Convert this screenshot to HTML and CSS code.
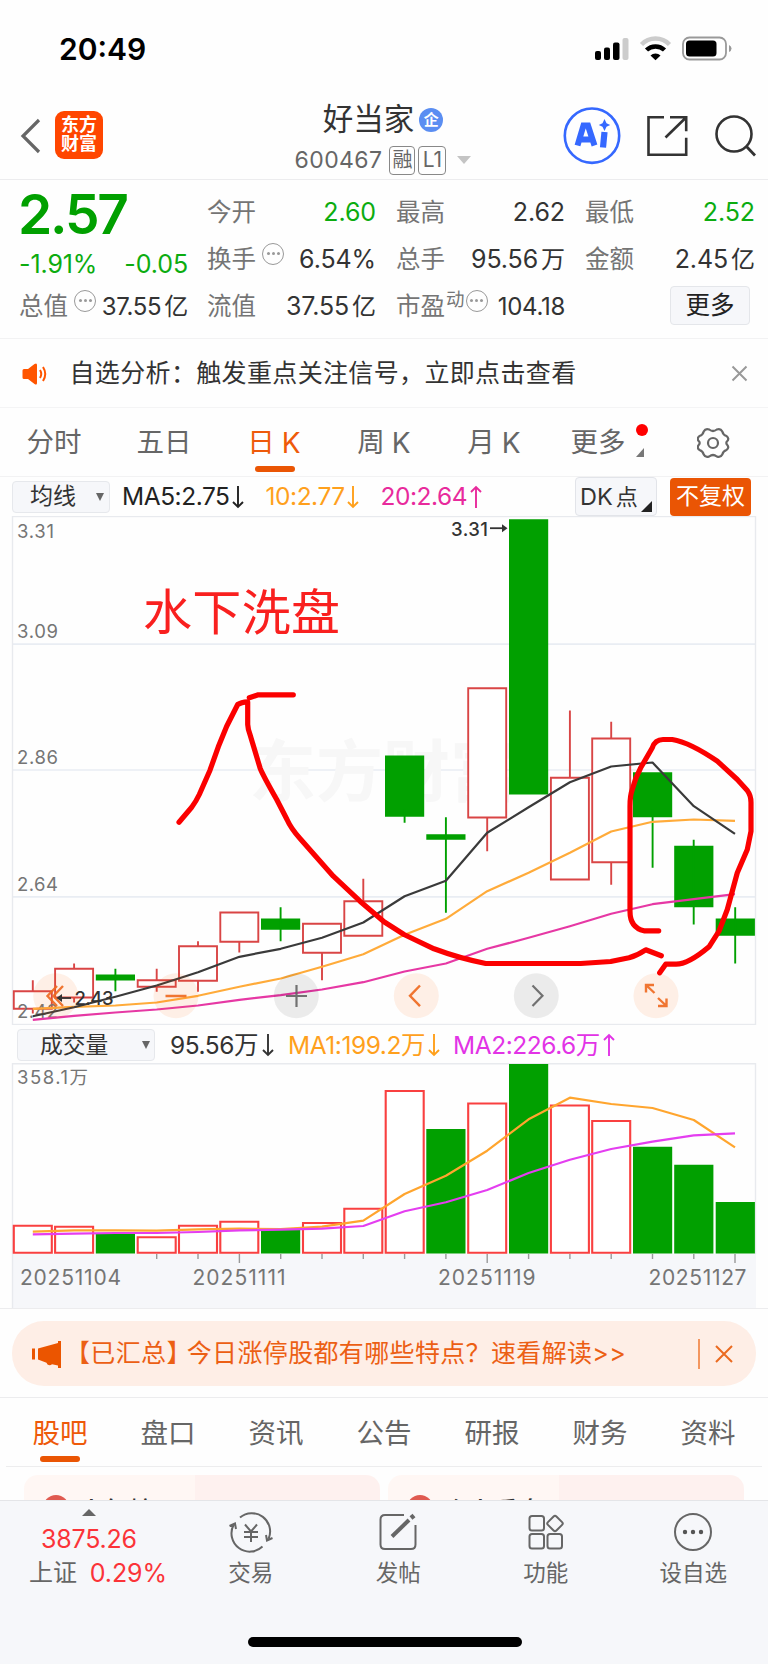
FILE: index.html
```html
<!DOCTYPE html>
<html lang="zh-CN">
<head>
<meta charset="utf-8">
<title>好当家 600467</title>
<link rel="stylesheet" href="styles.css">
</head>
<body>
<div class="phone">
  <div class="status">
    <span class="clock">20:49</span>
    <svg class="status-icons" width="138" height="26" viewBox="595 36 138 26">
      <rect x="595" y="51" width="6" height="9" rx="2"/>
      <rect x="604" y="47.500" width="6" height="12.500" rx="2"/>
      <rect x="613" y="42.500" width="6.500" height="17.500" rx="2"/>
      <rect x="622.500" y="38" width="6" height="22" rx="2" fill="#ccc"/>
      <path d="M641.500 44.500a19.500 19.500 0 0 1 28 0" fill="none" stroke="#ccc" stroke-width="4.500"/>
      <path d="M646.500 50a13 13 0 0 1 18 0" fill="none" stroke="#000" stroke-width="4.500"/>
      <path d="M650.500 55.500a7 7 0 0 1 10 0l-5 4.800z"/>
      <rect x="683" y="37.500" width="43" height="22" rx="6.500" fill="none" stroke="#999" stroke-width="1.800"/>
      <rect x="686" y="40.500" width="30.500" height="16" rx="3.500"/>
      <path d="M729 45q2.500 1 2.500 3.500t-2.500 3.500z" fill="#999"/>
    </svg>
  </div>

  <header class="header">
    <div class="header-left">
      <svg width="22" height="36" viewBox="0 0 22 36"><path d="M19 2L3 18l16 16" fill="none" stroke="#666" stroke-width="3.200"/></svg>
      <div class="brand">东方<br>财富</div>
    </div>
    <div class="title">
      <div class="name">好当家<span class="ent">企</span></div>
      <div class="code"><span class="code-num">600467</span><span class="tag">融</span><span class="tag tag-l">L1</span><i class="caret"></i></div>
    </div>
    <div class="header-right">
      <svg width="200" height="62" viewBox="560 105 200 62" fill="none">
        <circle cx="592" cy="135.700" r="27.200" stroke="#3568ff" stroke-width="2.600"/>
        <path d="M577.500 145.500l6-20h4.500l6.500 20M580.500 139.500h11" stroke="#3568ff" stroke-width="6"/>
        <path d="M604.500 132l-1.500 15.500" stroke="#3568ff" stroke-width="6.200"/>
        <path d="M604.500 119l2 4.200 3.700 1.800-3.700 1.800-2 4.200-2-4.200-3.700-1.800 3.700-1.800z" fill="#3568ff"/>
        <path d="M664 117.300h-15.500v37.400h37.700v-17M670 117.300h16.200v14M685.500 118l-20 19.500" stroke="#333" stroke-width="2.600"/>
        <circle cx="734" cy="134" r="17.500" stroke="#333" stroke-width="2.600"/>
        <path d="M746 146l9 9.500" stroke="#333" stroke-width="2.800"/>
      </svg>
    </div>
  </header>

  <section class="quote">
    <div class="q-main">
      <div class="price">2.57</div>
      <div class="chg"><span>-1.91%</span><span>-0.05</span></div>
      <div class="cell total"><label>总值</label><i class="info"></i><b>37.55<u>亿</u></b></div>
    </div>
    <div class="q-grid">
      <div class="cell"><label>今开</label><b class="g">2.60</b></div>
      <div class="cell"><label>最高</label><b>2.62</b></div>
      <div class="cell"><label>最低</label><b class="g">2.52</b></div>
      <div class="cell"><label>换手</label><i class="info"></i><b>6.54%</b></div>
      <div class="cell"><label>总手</label><b>95.56<u>万</u></b></div>
      <div class="cell"><label>金额</label><b>2.45<u>亿</u></b></div>
      <div class="cell"><label>流值</label><b>37.55<u>亿</u></b></div>
      <div class="cell pe"><label>市盈</label><em>动</em><i class="info"></i><b>104.18</b></div>
      <div class="cell"><button class="more">更多</button></div>
    </div>
  </section>

  <div class="notice">
    <svg width="28" height="24" viewBox="0 0 28 24"><path d="M1.500 8.500q0-1.500 1.500-1.500h4L13.500 2q2.500-1.500 2.500 1v18q0 2.500-2.500 1L7 17H3q-1.500 0-1.500-1.500z" fill="#ff5500"/><path d="M19 8q2.500 4 0 8M22 5q4.500 7 0 14" fill="none" stroke="#ff5500" stroke-width="2"/></svg>
    <span>自选分析：触发重点关注信号，立即点击查看</span>
    <svg class="close" width="17" height="17" viewBox="0 0 17 17"><path d="M1.500 1.500l14 14M15.500 1.500l-14 14" stroke="#999" stroke-width="2"/></svg>
  </div>

  <nav class="ktabs">
    <span>分时</span><span>五日</span><span class="on">日<s>K</s></span><span>周<s>K</s></span><span>月<s>K</s></span>
    <span class="ktab-more">更多<i class="dot"></i><i class="corner"></i></span>
    <span><svg width="34" height="34" viewBox="-16 -17 34 34" fill="none" stroke="#666" stroke-width="2.200"><circle r="5"/><path d="M-3.800-13.500Q0-10.500 3.800-13.500Q7.500-15 9.300-11.500Q10-8.200 13.500-7Q16.500-4.500 14.300-2Q12.300 0 14.300 2Q16.500 4.500 13.500 7Q10 8.200 9.300 11.500Q7.500 15 3.800 13.500Q0 10.500-3.800 13.500Q-7.500 15-9.300 11.500Q-10 8.200-13.500 7Q-16.500 4.500-14.300 2Q-12.300 0-14.300-2Q-16.500-4.500-13.500-7Q-10-8.200-9.300-11.500Q-7.500-15-3.800-13.500z"/></svg></span>
  </nav>

  <div class="marow">
    <div class="select sel-ma"><span>均线</span><i></i></div>
    <div class="ma c-black">MA5:2.75<svg width="12" height="24" viewBox="0 0 12 24"><path d="M6 1v21M1 17l5 5 5-5"/></svg></div>
    <div class="ma c-orange">10:2.77<svg width="12" height="24" viewBox="0 0 12 24"><path d="M6 1v21M1 17l5 5 5-5"/></svg></div>
    <div class="ma c-pink">20:2.64<svg width="12" height="24" viewBox="0 0 12 24"><path d="M6 23V2M1 7l5-5 5 5"/></svg></div>
    <button class="dk">DK<span>点</span></button>
    <button class="fq">不复权</button>
  </div>

  <svg class="chart" width="768" height="509" viewBox="0 516.500 768 509">
    <path d="M12.500 644.700H755.500M12.500 770.500H755.500M12.500 897.300H755.500" stroke="#e9edf3" stroke-width="1.700"/>
    <rect x="12.500" y="517" width="743" height="508" fill="none" stroke="#e8eaee" stroke-width="1.400"/>
    <text class="mark" x="249" y="796" textLength="268">东方财富</text>
    <g fill="#fff" stroke="#d94545" stroke-width="1.900">
      <path d="M32.800 980.700V1014M74.100 964V1003M156.700 969.300V992.300M198 941.700V992.300M239.300 942V953M322 953V980.700M363.300 879.300V902M487.200 818V851.700M569.900 711V779M611.200 722.300V739M611.200 862V885.300"/>
      <path d="M13.800 991.700h38v17.600h-38zM55.100 969.300h38v28.700h-38zM137.700 980.700h38v6.600h-38zM179 946.700h38v34.600h-38zM220.300 913h38v29.300h-38zM303 924.300h38v29h-38zM344.300 901.700h38v34.600h-38zM468.200 688.700h38v129.300h-38zM550.900 778.300h38v101.700h-38zM592.200 739h38v123.700h-38z"/>
    </g>
    <g class="ylab">
      <text x="17" y="538" textLength="37">3.31</text><text x="17" y="638" textLength="41">3.09</text>
      <text x="17" y="764.700" textLength="41">2.86</text><text x="17" y="891.700" textLength="41">2.64</text>
      <text x="17" y="1018" textLength="41">2.42</text>
    </g>
    <g fill="#01a000">
      <path d="M95.800 975h39.200v6h-39.200zM261 919h39.200v11.300h-39.200zM385 756h39.200v61.300h-39.200zM426.300 834.700h39.200v5.600h-39.200zM509 519.700h39.200v275.300h-39.200zM633 772.700h39.200v45h-39.200zM674.200 846.300h39.200v61.400h-39.200zM715.700 919h39.200v17.300h-39.200z"/>
      <path d="M115.400 969.300V991.700M280.600 907.700V941.700M404.600 810V823.300M445.900 817.700V913.300M652.600 810V868.300M693.700 840.300V925M735.200 907.700V964" stroke="#01a000" stroke-width="1.900"/>
    </g>
    <g fill="none" stroke-width="2.200" stroke-linejoin="round">
      <polyline stroke="#e638a4" points="32.800,1020.300 74.100,1016.300 115.400,1013 156.700,1010 198,1006 239.400,1000.300 280.700,995.700 322,990 363.300,982.700 404.600,972 445.900,964 487.200,949.300 528.600,938.300 569.900,926.700 611.200,914.300 652.500,904.700 693.800,899.700 735,894.700"/>
      <polyline stroke="#ffab3a" points="32.800,1009.300 74.100,1007.300 115.400,1006 156.700,1003 198,996.300 239.400,987.300 280.700,979 322,967.300 363.300,954.700 404.600,935.300 445.900,919.300 487.200,891.700 528.600,873.300 569.900,853.300 611.200,832 652.500,822.300 693.800,820 735,821.300"/>
      <polyline stroke="#3a3a3a" points="32.800,1016.700 74.100,1007.700 115.400,997.300 156.700,986 198,972.700 239.400,957.300 280.700,949.300 322,938.300 363.300,923 404.600,896.700 445.900,881.300 487.200,833.300 528.600,807.700 569.900,782.700 611.200,767 652.500,763 693.800,806.700 735,834.300"/>
    </g>
    <text class="hi" x="451" y="536" textLength="37">3.31</text>
    <path d="M490 528.700h13" stroke="#333" stroke-width="1.800"/><path d="M502 524.700l5.500 4-5.500 4z" fill="#333"/>
    <g opacity=".92">
      <circle cx="55.700" cy="996.300" r="22.500" fill="#ff6a13" fill-opacity=".11"/>
      <circle cx="176" cy="996.300" r="22.500" fill="#ff6a13" fill-opacity=".11"/>
      <circle cx="296.300" cy="996.300" r="22.500" fill="#000" fill-opacity=".08"/>
      <circle cx="416.300" cy="996.300" r="22.500" fill="#ff6a13" fill-opacity=".11"/>
      <circle cx="536.300" cy="996.300" r="22.500" fill="#000" fill-opacity=".08"/>
      <circle cx="656" cy="996.300" r="22.500" fill="#ff6a13" fill-opacity=".11"/>
      <g fill="none" stroke="#ef6a20" stroke-width="2.400">
        <path d="M57 986.500l-9.500 10 9.500 10M63 986.500l-9.500 10 9.500 10M165.500 996.500h21M420 986l-10 10.300 10 10.300"/>
        <path d="M646 993v-7.500h8M646 985.500l8.500 8M666.500 999v7.500h-8.500M666.500 1006.500l-8.500-8"/>
      </g>
      <path d="M286 996.500h21M296.500 985.500v22M532.500 986l10 10.300-10 10.300" fill="none" stroke="#666" stroke-width="2.200"/>
    </g>
    <path d="M60 998.500h11" stroke="#333" stroke-width="1.800"/><path d="M62 994.500l-5.500 4 5.500 4z" fill="#333"/>
    <text class="hi lo" x="74.500" y="1005.300" textLength="39">2.43</text>
    <g class="ink">
      <path d="M179 822.700L191.700 807.700Q196 802 199.300 795L210 770.700L218.300 747.300L226.700 726.700L237.700 705Q241 702.700 247.700 702.300V725Q248 730 250 735L260 768.300Q262 774 276.700 800L287 820Q291 829 300 839L333.300 876.700L360 901.700L384 922.300L404 935L434 949.300Q460 959 485.700 964H580.700L610.700 962L629 958.300Q637 956 645.700 950.300L661.300 956.300"/>
      <path d="M249.300 698.300L258.300 695.300H293.300"/>
      <path d="M658.700 931.300H644Q630 928 630 912V806.700Q630 796 632.300 790Q635 779 640.700 768.300L652.300 748.300Q655 740 663 740H672.300Q690 743 717.300 761.700L737.300 780L747.300 791Q751 796 751 803V831.700L747.300 850L737.300 873.300L727.300 910L719 931.700L709 947.300Q688 965 675.700 964.700H665.700L659.700 973.300"/>
    </g>
    <text class="note" x="143" y="630.500" textLength="197">水下洗盘</text>
  </svg>

  <div class="marow vol">
    <div class="select sel-vol"><span>成交量</span><i></i></div>
    <div class="ma c-dark">95.56万<svg width="12" height="24" viewBox="0 0 12 24"><path d="M6 1v21M1 17l5 5 5-5"/></svg></div>
    <div class="ma c-orange">MA1:199.2万<svg width="12" height="24" viewBox="0 0 12 24"><path d="M6 1v21M1 17l5 5 5-5"/></svg></div>
    <div class="ma c-mag">MA2:226.6万<svg width="12" height="24" viewBox="0 0 12 24"><path d="M6 23V2M1 7l5-5 5 5"/></svg></div>
  </div>

  <svg class="chart" width="768" height="245" viewBox="0 1063 768 245">
    <rect x="12.500" y="1253.500" width="743.500" height="54.500" fill="#f6f7fa"/>
    <path d="M12.500 1308V1063.700H755.500V1254" fill="none" stroke="#e8eaee" stroke-width="1.400"/>
    <text class="ylab" x="17" y="1084" textLength="71">358.1万</text>
    <g fill="#fff" stroke="#f94040" stroke-width="2.100">
      <path d="M13.800 1225.700h38v27h-38zM55.100 1226.700h38v26h-38zM137.700 1237.300h38v15.400h-38zM179 1225.700h38v27h-38zM220.300 1221.700h38v31h-38zM303 1223h38v29.700h-38zM344.300 1208.700h38v44h-38zM385.700 1091h38v161.700h-38zM468.200 1103.500h38v149.200h-38zM550.900 1105.500h38v147.200h-38zM592.200 1121h38v131.700h-38z"/>
    </g>
    <path fill="#01a000" d="M95.800 1233.700h39.200v19.800h-39.200zM261 1230h39.200v23.500h-39.200zM426.300 1129h39.200v124.500h-39.200zM509 1064h39.200v189.500h-39.200zM633 1146.700h39.200v106.800h-39.200zM674.200 1164.700h39.200v88.800h-39.200zM715.700 1202h39.200v51.500h-39.200z"/>
    <path d="M156.700 1254v5M198 1254v5M280.700 1254v5M322 1254v5M363.300 1254v5M404.600 1254v5M445.900 1254v5M528.600 1254v5M569.900 1254v5M611.200 1254v5M652.500 1254v5M693.800 1254v5M239.400 1254v9M487.200 1254v9M735 1254v9" stroke="#999" stroke-width="1.400"/>
    <g fill="none" stroke-width="2.200" stroke-linejoin="round">
      <polyline stroke="#ffa52e" points="32.800,1231.700 74.100,1230.300 115.400,1230.300 156.700,1230.700 198,1229.300 239.400,1228.700 280.700,1229 322,1226.700 363.300,1220.700 404.600,1194 445.900,1175.700 487.200,1150.700 528.600,1119.300 569.900,1097.700 611.200,1104 652.500,1108 693.800,1120 735,1147.300"/>
      <polyline stroke="#e43ef0" points="32.800,1234.300 74.100,1233.700 115.400,1233 156.700,1233 198,1232 239.400,1230.300 280.700,1229.700 322,1228.700 363.300,1226 404.600,1211.300 445.900,1202.300 487.200,1190 528.600,1173 569.900,1159.700 611.200,1149 652.500,1141.700 693.800,1135.300 735,1133.300"/>
    </g>
    <g class="xlab">
      <text x="20" y="1284.500" textLength="101">20251104</text><text x="192.500" y="1284.500" textLength="93">20251111</text>
      <text x="438" y="1284.500" textLength="97.500">20251119</text><text x="648.500" y="1284.500" textLength="98">20251127</text>
    </g>
  </svg>

  <div class="promo">
    <div class="promo-pill">
      <svg width="32" height="28" viewBox="0 0 32 28" fill="#eb5500"><path d="M1 8.500h3v11H1zM7 8.500L27 3V1h3v27h-3v-2.500l-6-1.200q-2 1.700-4.500.2l-1-1.800L7 19.500z"/></svg>
      <span class="promo-text"><span class="br">【已汇总】</span>今日涨停股都有哪些特点？速看解读&gt;&gt;</span>
      <i class="bar"></i>
      <svg width="18" height="18" viewBox="0 0 18 18"><path d="M1 1l16 16M17 1L1 17" stroke="#eb6a20" stroke-width="2"/></svg>
    </div>
  </div>

  <nav class="btabs"><span class="on">股吧</span><span>盘口</span><span>资讯</span><span>公告</span><span>研报</span><span>财务</span><span>资料</span></nav>

  <div class="cards">
    <div class="card"><i></i><span>人气榜</span></div>
    <div class="card card-b"><i></i><span>个人看盘</span></div>
  </div>

  <footer class="dock">
    <div class="index"><i></i><span class="idx">3875.26</span><span class="idx2"><em>上证</em>0.29%</span></div>
    <div class="item"><svg width="46" height="42" viewBox="-23 -21 46 42" fill="none" stroke="#666" stroke-width="2"><path d="M-11-14.500A18.300 18.300 0 0 1 17.500 7M21.500 6l-5.500 2.500-1-5.500M11.500 14.500A18.300 18.300 0 0 1-17.500-7M-21.500-6l5.500-2.500 1 5.500M-6-7.500l6 7 6-7M0 0v10M-7 0H7M-7 5H7"/></svg><span>交易</span></div>
    <div class="item"><svg width="46" height="42" viewBox="-23 -21 46 42" fill="none" stroke="#666" stroke-width="2"><path d="M6-17h-19q-4.500 0-4.500 4.500v25q0 4.500 4.500 4.500h26q4.500 0 4.500-4.500V-7"/><path d="M-6 4.500L11-12" stroke-width="4"/><path d="M13-14l3-2.500" stroke-width="4.500"/></svg><span>发帖</span></div>
    <div class="item"><svg width="46" height="42" viewBox="-23 -21 46 42" fill="none" stroke="#666" stroke-width="2"><rect x="-16.500" y="-16" width="14.500" height="14.500" rx="2.500"/><rect x="-16.500" y="2" width="14.500" height="14.500" rx="2.500"/><rect x="1.500" y="2" width="14.500" height="14.500" rx="2.500"/><rect x="3" y="-14.500" width="12" height="12" rx="2" transform="rotate(45 9 -8.500)"/></svg><span>功能</span></div>
    <div class="item"><svg width="46" height="42" viewBox="-23 -21 46 42"><circle r="18" fill="none" stroke="#666" stroke-width="2"/><path d="M-8 0h.01M0 0h.01M8 0h.01" stroke="#555" stroke-width="4.400" stroke-linecap="round"/></svg><span>设自选</span></div>
    <i class="home"></i>
  </footer>
</div>
</body>
</html>
```

FILE: styles.css
```css
* { box-sizing: border-box; }
body { margin: 0; background: #fff; }
.phone { width: 768px; height: 1664px; overflow: hidden; display: flex; flex-direction: column; background: #fefefe; color: #333; font-family: Inter, "Noto Sans CJK SC", sans-serif; line-height: 1; }
.phone > * { flex: none; }
svg { flex: none; }
i, em { font-style: normal; }
button { font-family: inherit; margin: 0; padding: 0; line-height: 1; }

.status { height: 100px; padding: 0 35px 0 59px; display: flex; justify-content: space-between; align-items: flex-start; }
.clock { font-size: 30px; font-weight: 600; color: #000; margin-top: 34px; }
.status-icons { margin-top: 36px; }

.header { height: 80px; display: grid; grid-template-columns: 279px 208px 1fr; border-bottom: 1.500px solid #ececee; }
.header-left { display: flex; align-items: flex-start; padding-left: 20px; }
.header-left svg { margin-top: 18px; }
.brand { width: 48px; height: 48px; margin: 11px 0 0 13px; border-radius: 9px; background: #ff4600; color: #fff; font-size: 18px; font-weight: 700; line-height: 19px; text-align: center; padding-top: 4px; }
.title { display: flex; flex-direction: column; align-items: center; }
.name { display: flex; align-items: center; font-size: 30.500px; height: 40px; padding-bottom: 1px; color: #333; }
.ent { width: 24px; height: 24px; margin-left: 5px; border-radius: 50%; background: #5b8ef2; color: #fff; font-size: 15px; font-weight: 700; line-height: 23px; text-align: center; }
.code { display: flex; align-items: center; height: 40px; color: #666; font-size: 23px; }
.code-num { margin-right: 7px; letter-spacing: .4px; }
.tag { width: 26px; height: 29px; border: 1.600px solid #888; border-radius: 4px; font-size: 20px; line-height: 26px; text-align: center; }
.tag-l { width: 28px; margin-left: 3px; font-size: 21px; }
.caret { margin-left: 11px; border: 7px solid transparent; border-top: 8px solid #c4c4c4; border-bottom: 0; }
.header-right { padding: 5px 0 0 73px; }

.quote { height: 159px; border-bottom: 1.500px solid #f2f2f3; display: flex; padding: 9px 12px 0 19px; }
.q-main { width: 169px; margin-right: 19px; }
.price { height: 51px; line-height: 51px; font-size: 55px; font-weight: 600; color: #01a000; letter-spacing: -2.200px; margin-left: -1px; }
.chg { display: flex; justify-content: space-between; height: 43px; line-height: 48px; font-size: 25px; color: #0cac10; letter-spacing: -.1px; }
.q-grid { flex: 1; display: grid; grid-template-columns: 169px 169px 170px; grid-template-rows: 47px 47px 47px; column-gap: 20px; }
.cell { display: flex; align-items: center; font-size: 25px; height: 47px; }
.cell label { color: #757575; font-size: 24.500px; }
.cell b { margin-left: auto; font-weight: 400; color: #333; white-space: nowrap; letter-spacing: -.1px; }
.cell b.g { color: #0cac10; }
.cell u { text-decoration: none; font-size: 24px; margin-left: 3px; }
.total b, .pe b { font-size: 24px; letter-spacing: -.3px; }
.info { flex: none; width: 22px; height: 22px; border: 1.800px solid #999; border-radius: 50%; margin: -12px 0 0 6px; display: flex; align-items: center; justify-content: center; }
.info::before { content: ""; width: 3px; height: 3px; border-radius: 50%; background: #999; box-shadow: -5px 0 #999, 5px 0 #999; }
.pe em { font-size: 18.500px; color: #757575; margin: -15px 0 0 1px; }
.pe .info { margin-left: 1px; }
.more { width: 80px; height: 39px; margin: -3px 0 0 85px; border: 1.500px solid #e4e6ea; border-radius: 4px; background: #f6f7fa; font-size: 24.500px; color: #222; }

.notice { height: 69px; border-bottom: 1.500px solid #f4f4f5; display: flex; align-items: center; padding: 1px 20px 0 21px; font-size: 25px; letter-spacing: .35px; color: #333; }
.notice span { margin-left: 20.500px; white-space: nowrap; }
.close { margin-left: auto; }

.ktabs { height: 69px; border-bottom: 1.500px solid #f2f2f3; display: grid; grid-template-columns: repeat(7, 110px); color: #666; font-size: 27.500px; }
.ktabs span { position: relative; display: flex; align-items: center; justify-content: center; padding: 2px 2px 0 0; }
.ktabs s { text-decoration: none; margin-left: 7px; font-size: 28px; }
.ktabs .on, .btabs .on { color: #ee5a0a; }
.ktabs .on::after, .btabs .on::after { content: ""; position: absolute; left: 50%; bottom: 4px; width: 40px; margin-left: -20px; height: 6px; border-radius: 3px; background: #ea5504; }
.ktabs .ktab-more { padding-right: 14px; }
.dot { position: absolute; left: 86px; top: 16px; width: 12px; height: 12px; border-radius: 50%; background: #f00; }
.corner { position: absolute; left: 86px; top: 40px; border-left: 8px solid transparent; border-bottom: 9px solid #777; }

.marow { height: 39px; display: flex; align-items: center; padding-left: 12px; }
.select { display: flex; align-items: center; height: 32px; border: 1.500px solid #e6e8ec; border-radius: 4px; background: #f6f7fa; color: #333; }
.select i { border: 4.500px solid transparent; border-top: 8px solid #666; border-bottom: 0; margin-left: auto; }
.sel-ma { width: 98px; padding: 0 5px 0 17px; font-size: 23px; }
.sel-vol { width: 138px; padding: 0 4px 0 22px; font-size: 22.800px; }
.ma { display: flex; align-items: center; justify-content: space-between; font-size: 24.500px; letter-spacing: -.45px; white-space: nowrap; }
.ma svg { fill: none; stroke: currentColor; stroke-width: 1.900; }
.sel-ma + .ma { margin-left: 12px; width: 121.500px; }
.ma + .ma { margin-left: 22px; width: 93px; }
.ma + .ma + .ma { margin-left: 22px; width: 101px; }
.vol { height: 38px; padding: 2px 0 0 17px; }
.sel-vol + .ma { margin-left: 15px; width: 104px; }
.vol .ma + .ma { margin-left: 14px; width: 152px; }
.vol .ma + .ma + .ma { margin-left: 13px; width: 162px; }
.c-black { color: #222; } .c-dark { color: #333; } .c-orange { color: #ffa01c; } .c-pink { color: #e82a9c; } .c-mag { color: #e233e6; }
.dk { position: relative; margin-left: auto; width: 82px; height: 39px; border: 1.500px solid #e2e4e9; border-radius: 4px; background: #f6f7fa; font-size: 23.500px; color: #333; text-align: left; padding-left: 4px; }
.dk span { font-size: 22px; margin-left: 3px; }
.dk::after { content: ""; position: absolute; right: 4px; bottom: 3px; border-left: 11px solid transparent; border-bottom: 11px solid #222; }
.fq { width: 81px; height: 38px; margin: 0 17px 0 13px; border: 0; border-radius: 4px; background: #ea5504; color: #fff; font-size: 23px; }

.chart { display: block; }
.mark { font: 700 67px "Noto Sans CJK SC", sans-serif; fill: #f7f7f7; }
.ylab { font-size: 18.500px; fill: #757575; }
.xlab { font-size: 21px; fill: #757575; }
.hi { font-size: 18.500px; font-weight: 500; fill: #333; }
.ink { fill: none; stroke: #fb0000; stroke-width: 5.200; stroke-linecap: round; stroke-linejoin: round; }
.note { font-size: 49px; fill: #f9201f; font-weight: 400; }

.promo { height: 89.500px; border: solid #ececee; border-width: 1.500px 0; padding: 12px 12px 0; }
.promo-pill { height: 65px; border-radius: 32px; background: #feeee6; display: flex; align-items: center; padding: 0 23px 0 19px; color: #ec5f14; font-size: 25px; }
.promo-text { margin-left: 2px; letter-spacing: .35px; white-space: nowrap; }
.br { margin-right: -5px; }
.bar { margin-left: auto; width: 2px; height: 30px; background: #f3965f; margin-right: 15px; }

.btabs { height: 69px; margin: 0 6px; border-bottom: 1.500px solid #ededee; display: grid; grid-template-columns: repeat(7, 108px); color: #666; font-size: 27.500px; }
.btabs span { position: relative; display: flex; align-items: center; justify-content: center; padding-top: 4px; }
.cards { height: 33px; padding: 8px 24px 0; display: flex; gap: 8px; overflow: hidden; }
.card { width: 356px; height: 60px; border-radius: 14px; background: linear-gradient(90deg, #fff7f4 0 48%, #fef1ef 48%); display: flex; align-items: flex-start; padding: 20px 0 0 19px; color: #333; font-size: 25px; font-weight: 500; }
.card i { width: 26px; height: 26px; border-radius: 50%; background: #e05a50; margin-right: 10px; }
.card span { padding-top: 4px; }

.dock { position: relative; flex: 1 !important; background: #f6f7fa; border-top: 1.500px solid #e4e5e8; display: grid; grid-template-columns: 177px repeat(4, 147.500px); color: #666; }
.item { display: flex; flex-direction: column; align-items: center; padding-top: 10px; font-size: 22.500px; }
.item span { margin-top: 9px; }
.index { padding: 8px 0 0 29px; display: flex; flex-direction: column; align-items: flex-start; color: #fb3338; }
.index i { margin-left: 53px; border: 7px solid transparent; border-bottom: 7px solid #666; border-top: 0; }
.idx { margin: 11px 0 0 12px; font-size: 25px; letter-spacing: -.2px; }
.idx2 { margin-top: 9px; display: flex; align-items: center; font-size: 25px; letter-spacing: -.1px; }
.idx2 em { font-size: 24px; color: #666; margin-right: 13px; }
.home { position: absolute; left: 247.500px; top: 136.500px; width: 274px; height: 10px; border-radius: 5px; background: #000; }
```
